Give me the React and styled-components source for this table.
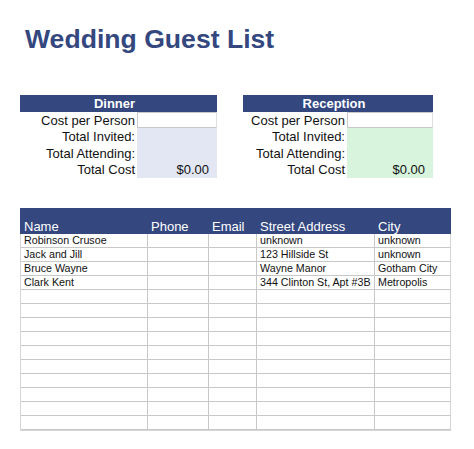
import React from 'react'
import styled, { createGlobalStyle } from 'styled-components';

const GlobalStyle = createGlobalStyle`
  body {
    margin: 0;
    background: #fff;
    font-family: "Liberation Sans", Arial, sans-serif;
  }
`

const NAVY = '#34477f';

// the two little cost boxes at the top
const summaries = [
  { title: 'Dinner', labelWidth: 117, valueWidth: 80, fill: '#e3e7f3', gap: 0 },
  { title: 'Reception', labelWidth: 104, valueWidth: 86, fill: '#d8f4dc', gap: 26 },
];

const summaryRows = ['Total Invited:', 'Total Attending:'];

const columns = [
  { name: 'Name', width: 127 },
  { name: 'Phone', width: 61 },
  { name: 'Email', width: 48 },
  { name: 'Street Address', width: 118 },
  { name: 'City', width: 77 },
];

const guests = [
  ['Robinson Crusoe', '', '', 'unknown', 'unknown'],
  ['Jack and Jill', '', '', '123 Hillside St', 'unknown'],
  ['Bruce Wayne', '', '', 'Wayne Manor', 'Gotham City'],
  ['Clark Kent', '', '', '344 Clinton St, Apt #3B', 'Metropolis'],
];

const TOTAL_ROWS = 14;

const App = () => {
  const rows = [...guests];
  while (rows.length < TOTAL_ROWS) rows.push(['', '', '', '', '']);

  const gridCols = columns.map((c) => c.width + 'px').join(' ');

  return (
    <Page>
      <GlobalStyle />
      <Title>Wedding Guest List</Title>

      <SummaryRow>
        {summaries.map((s) => (
          <SummaryBox key={s.title} $gap={s.gap} $cols={`${s.labelWidth}px ${s.valueWidth}px`}>
            <SummaryHead>{s.title}</SummaryHead>
            <Label>Cost per Person</Label>
            <InputCell />
            {summaryRows.map((r) => (
              <React.Fragment key={r}>
                <Label>{r}</Label>
                <ValueCell $fill={s.fill} />
              </React.Fragment>
            ))}
            <Label>Total Cost</Label>
            <ValueCell $fill={s.fill}>$0.00</ValueCell>
          </SummaryBox>
        ))}
      </SummaryRow>

      <GuestTable>
        <HeadRow $cols={gridCols}>
          {columns.map((c) => (
            <HeadCell key={c.name}>{c.name}</HeadCell>
          ))}
        </HeadRow>
        {rows.map((r, i) => (
          <Row key={i} $cols={gridCols}>
            {r.map((txt, j) => (
              <Cell key={j}>{txt}</Cell>
            ))}
          </Row>
        ))}
      </GuestTable>
    </Page>
  )
}

export default App;


const Page = styled.div`
width: 474px;
height: 449px;
padding: 26px 0 0 20px;
box-sizing: border-box;
overflow: hidden;
`

const Title = styled.h1`
margin: 0 0 0 5px;
font-size: 26.6px;
line-height: 26px;
font-weight: bold;
color: ${NAVY};
letter-spacing: 0;
`

const SummaryRow = styled.div`
display: flex;
margin-top: 43px;
`

const SummaryBox = styled.div`
display: grid;
grid-template-columns: ${(p) => p.$cols};
grid-auto-rows: 16.6px;
margin-left: ${(p) => p.$gap}px;
font-size: 13px;
color: #111;
`

const SummaryHead = styled.div`
grid-column: 1 / -1;
background: ${NAVY};
color: #fff;
font-weight: bold;
text-align: center;
padding-right: 8px;
line-height: 17px;
`

const Label = styled.div`
text-align: right;
padding-right: 2px;
line-height: 17px;
white-space: nowrap;
`

const InputCell = styled.div`
background: #fff;
border: 1px solid #c9c9c9;
border-right-color: #e0e0e0;
`

const ValueCell = styled.div`
background: ${(p) => p.$fill};
text-align: right;
padding-right: 8px;
line-height: 17px;
`

const GuestTable = styled.div`
margin-top: 30px;
width: 431px;
border: 1px solid #d6d6d6;
border-top: none;
box-sizing: border-box;
`

const HeadRow = styled.div`
display: grid;
grid-template-columns: ${(p) => p.$cols};
height: 26px;
background: ${NAVY};
margin: 0 -1px;
`

const HeadCell = styled.div`
display: flex;
align-items: flex-end;
padding: 0 0 0 4px;
color: #fff;
font-size: 13px;
line-height: 15px;
`

const Row = styled.div`
display: grid;
grid-template-columns: ${(p) => p.$cols};
height: 14px;
border-bottom: 1px solid #c8c8c8;
box-sizing: border-box;
margin-right: -1px;
`

const Cell = styled.div`
border-right: 1px solid #c8c8c8;
padding-left: 3px;
font-size: 10.7px;
line-height: 13px;
color: #111;
white-space: nowrap;
overflow: hidden;
&:last-child {
  border-right: none;
}
`
